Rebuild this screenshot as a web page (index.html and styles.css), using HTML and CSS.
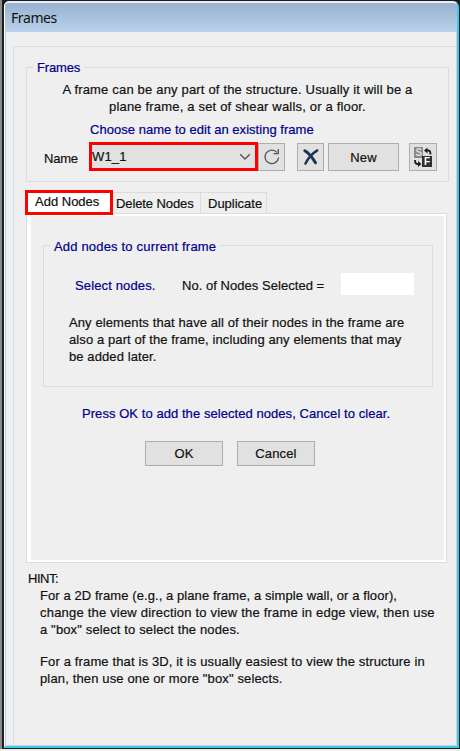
FILE: index.html
```html
<!DOCTYPE html>
<html lang="en">
<head>
<meta charset="utf-8">
<title>Frames</title>
<link rel="stylesheet" href="styles.css">
</head>
<body>
<div class="window">
  <header class="titlebar">Frames</header>
  <main class="panel">
    <section class="group frames-group">
      <h2 class="legend">Frames</h2>
      <p class="intro">A frame can be any part of the structure. Usually it will be a<br>plane frame, a set of shear walls, or a floor.</p>
      <p class="choose">Choose name to edit an existing frame</p>
      <div class="name-row">
        <span class="name-label">Name</span>
        <div class="select marked"><span>W1_1</span>
          <svg width="12" height="8" viewBox="0 0 12 8"><path d="M1.2 1.2 6 6l4.8-4.8" fill="none" stroke="#555" stroke-width="1.3"/></svg>
        </div>
        <button class="btn icon refresh" aria-label="Refresh">
          <svg width="18" height="18" viewBox="0 0 18 18"><path d="M15.6 9.6A6.8 6.8 0 1 1 14 4.4" fill="none" stroke="#555" stroke-width="1.3"/><path d="M15.3 1v4.6H10.500" fill="none" stroke="#555" stroke-width="1.3"/></svg>
        </button>
        <button class="btn icon delete" aria-label="Delete">
          <svg width="18" height="18" viewBox="0 0 18 18"><path d="M2.8 2.8C6 4.500 10 9 13.500 14.800" fill="none" stroke="#1c3557" stroke-width="3" stroke-linecap="round"/><path d="M15.300 2.400C10 5.600 6 10.500 3.400 15.600" fill="none" stroke="#1c3557" stroke-width="2.400" stroke-linecap="round"/></svg>
        </button>
        <button class="btn new">New</button>
        <button class="btn icon swap" aria-label="Swap">
          <svg width="20" height="20" viewBox="0 0 20 20"><path fill="#888" d="M1 0h9v11H1z"/><path fill="#303030" d="M9 9h10v11H9z"/><path d="M12 3.500h3.500q2 0 2 4M7 17H4q-2 0-2-4" fill="none" stroke="#222" stroke-width="1.800"/><path fill="#222" d="m11 3.500 3.500-3v6zM8.500 17 5 14v6z"/><text x="2.500" y="9" class="glyph s">S</text><text x="11" y="18" class="glyph f">F</text></svg>
        </button>
      </div>
    </section>

    <nav class="tabs">
      <span class="tab active marked">Add Nodes</span>
      <span class="tab second">Delete Nodes</span>
      <span class="tab third">Duplicate</span>
    </nav>
    <section class="page">
      <div class="group nodes-group">
        <h2 class="legend">Add nodes to current frame</h2>
        <div class="count-row">
          <span class="select-nodes">Select nodes.</span>
          <span class="count-label">No. of Nodes Selected =</span>
          <span class="count-field"></span>
        </div>
        <p class="note">Any elements that have all of their nodes in the frame are<br>also a part of the frame, including any elements that may<br>be added later.</p>
      </div>
      <p class="press">Press OK to add the selected nodes, Cancel to clear.</p>
      <div class="actions">
        <button class="btn">OK</button>
        <button class="btn">Cancel</button>
      </div>
    </section>

    <section class="hint">
      <h3>HINT:</h3>
      <p><span class="snug">For a 2D frame (e.g., a plane frame, a simple wall, or a floor),</span><br><span class="loose">change the view direction to view the frame in edge view, then use</span><br>a "box" select to select the nodes.</p>
      <p>For a frame that is 3D, it is usually easiest to view the structure in<br>plan, then use one or more "box" selects.</p>
    </section>
  </main>
</div>
</body>
</html>
```
FILE: styles.css
```css
* { box-sizing: border-box; }
html { height: 100%; background: #efefef; }
body {
  margin: 0;
  height: 749px;
  padding: 1px 1px 1px 4px;
  background: linear-gradient(90deg, #8a8a8a 0 2px, #1c1c1c 2px);
  font: 13px/17px "Liberation Sans", Arial, sans-serif;
  letter-spacing: 0.14px;
  -webkit-text-stroke: 0.2px;
  color: #111;
}
h2, h3, p { margin: 0; font-size: inherit; font-weight: normal; white-space: nowrap; }
.window {
  height: 747px;
  display: flex;
  flex-direction: column;
  background: #efefef;
  border: 1px solid #fff;
  border-top: 2px solid #e8eef5;
  border-right: 2px solid #3fc8e8;
  border-bottom: 2px solid #3fc8e8;
  border-radius: 5px 6px 0 0;
  box-shadow: inset 1px 0 #b6cfe8, inset -1px 0 #c2d5e6, inset 0 -1px #c2d5e6;
  overflow: hidden;
}
.titlebar {
  flex: none;
  height: 29px;
  padding: 0 6px;
  line-height: 29px;
  font-family: "Noto Sans", sans-serif;
  font-size: 14px;
  letter-spacing: -0.4px;
  -webkit-text-stroke: 0;
  background: linear-gradient(#98b2cf, #b9d1ea);
}
.panel {
  flex: 1;
  margin: 14px 1px 1px 8px;
  border-top: 1px solid #dcdcdc;
  border-left: 1px solid #dcdcdc;
  padding: 20px 0 0 13px;
}
.group { border: 1px solid #dcdcdc; }
.legend {
  width: max-content;
  background: #efefef;
  color: #00008b;
}
.frames-group { width: 423px; height: 115px; margin-left: -1px; }
.frames-group .legend { margin: -9px 0 0 7px; padding: 0 3px; letter-spacing: -0.15px; }
.intro { margin-top: 5px; text-align: center; letter-spacing: 0.18px; }
.choose { margin: 6px 0 0 63px; color: #00008b; letter-spacing: 0.03px; }
.name-row { display: flex; height: 29px; margin-top: 4px; }
.name-label { width: 62px; padding: 8px 0 0 17px; letter-spacing: -0.2px; }
.marked { border: 3px solid #ff0000; }
.select {
  width: 169px;
  height: 29px;
  display: flex;
  align-items: center;
  justify-content: space-between;
  padding: 0 4px 0 0;
  background: #e1e1e1;
}
.btn {
  display: flex;
  align-items: center;
  justify-content: center;
  padding: 0;
  border: 1px solid #adadad;
  background: #e1e1e1;
  color: #111;
  font: inherit;
  letter-spacing: inherit;
}
.name-row .btn { height: 28px; margin-top: 1px; }
.icon { width: 27px; }
.delete { margin-left: 12px; }
.new { width: 71px; margin-left: 4px; }
.name-row .swap { width: 28px; margin-left: 10px; }
.glyph { font: bold 10px "Liberation Sans", sans-serif; letter-spacing: 0; }
.s { fill: #ddd; }
.f { fill: #fff; }

.tabs { display: flex; align-items: flex-end; height: 23px; margin: 8px 0 0 -2px; }
.tab { height: 21px; border: 1px solid #dcdcdc; border-bottom: 0; padding-top: 2px; white-space: nowrap; letter-spacing: 0; }
.tab.active {
  position: relative;
  z-index: 1;
  width: 88px;
  height: 25px;
  margin-bottom: -2px;
  padding: 0 0 0 7px;
  border: 3px solid #ff0000;
  background: #fff;
}
.tab.second { width: 88px; padding-left: 3px; border-left: 0; letter-spacing: -0.1px; }
.third { width: 66px; padding-left: 7px; border-left: 0; }
.page {
  width: 421px;
  height: 350px;
  margin-left: -1px;
  border: 1px solid #dcdcdc;
  padding: 31px 0 0 16px;
  box-shadow: inset 4px 0 #fff, inset -2px 0 #fff, inset 0 2px #fff, inset 0 -2px #fff;
}
.nodes-group { width: 390px; height: 142px; }
.nodes-group .legend { margin: -8px 0 0 7px; padding: 0 3px; letter-spacing: 0.18px; }
.count-row { display: flex; height: 22px; margin-top: 18px; line-height: 25px; }
.select-nodes { width: 138px; padding-left: 31px; color: #00008b; white-space: nowrap; }
.count-label { width: 159px; white-space: nowrap; letter-spacing: 0.04px; }
.count-field { width: 73px; background: #fff; }
.note { margin: 19px 0 0 25px; letter-spacing: 0.1px; }
.press { margin: 18px 0 0 39px; color: #00008b; letter-spacing: 0.06px; }
.actions { display: flex; gap: 14px; margin: 19px 0 0 102px; }
.actions .btn { width: 78px; height: 25px; }
.hint { margin-top: 7px; padding-left: 1px; }
.hint p { margin: 0 0 15px 12px; }
.hint h3 { letter-spacing: -0.5px; }
.snug { letter-spacing: 0.08px; }
.loose { letter-spacing: 0.2px; }
```
